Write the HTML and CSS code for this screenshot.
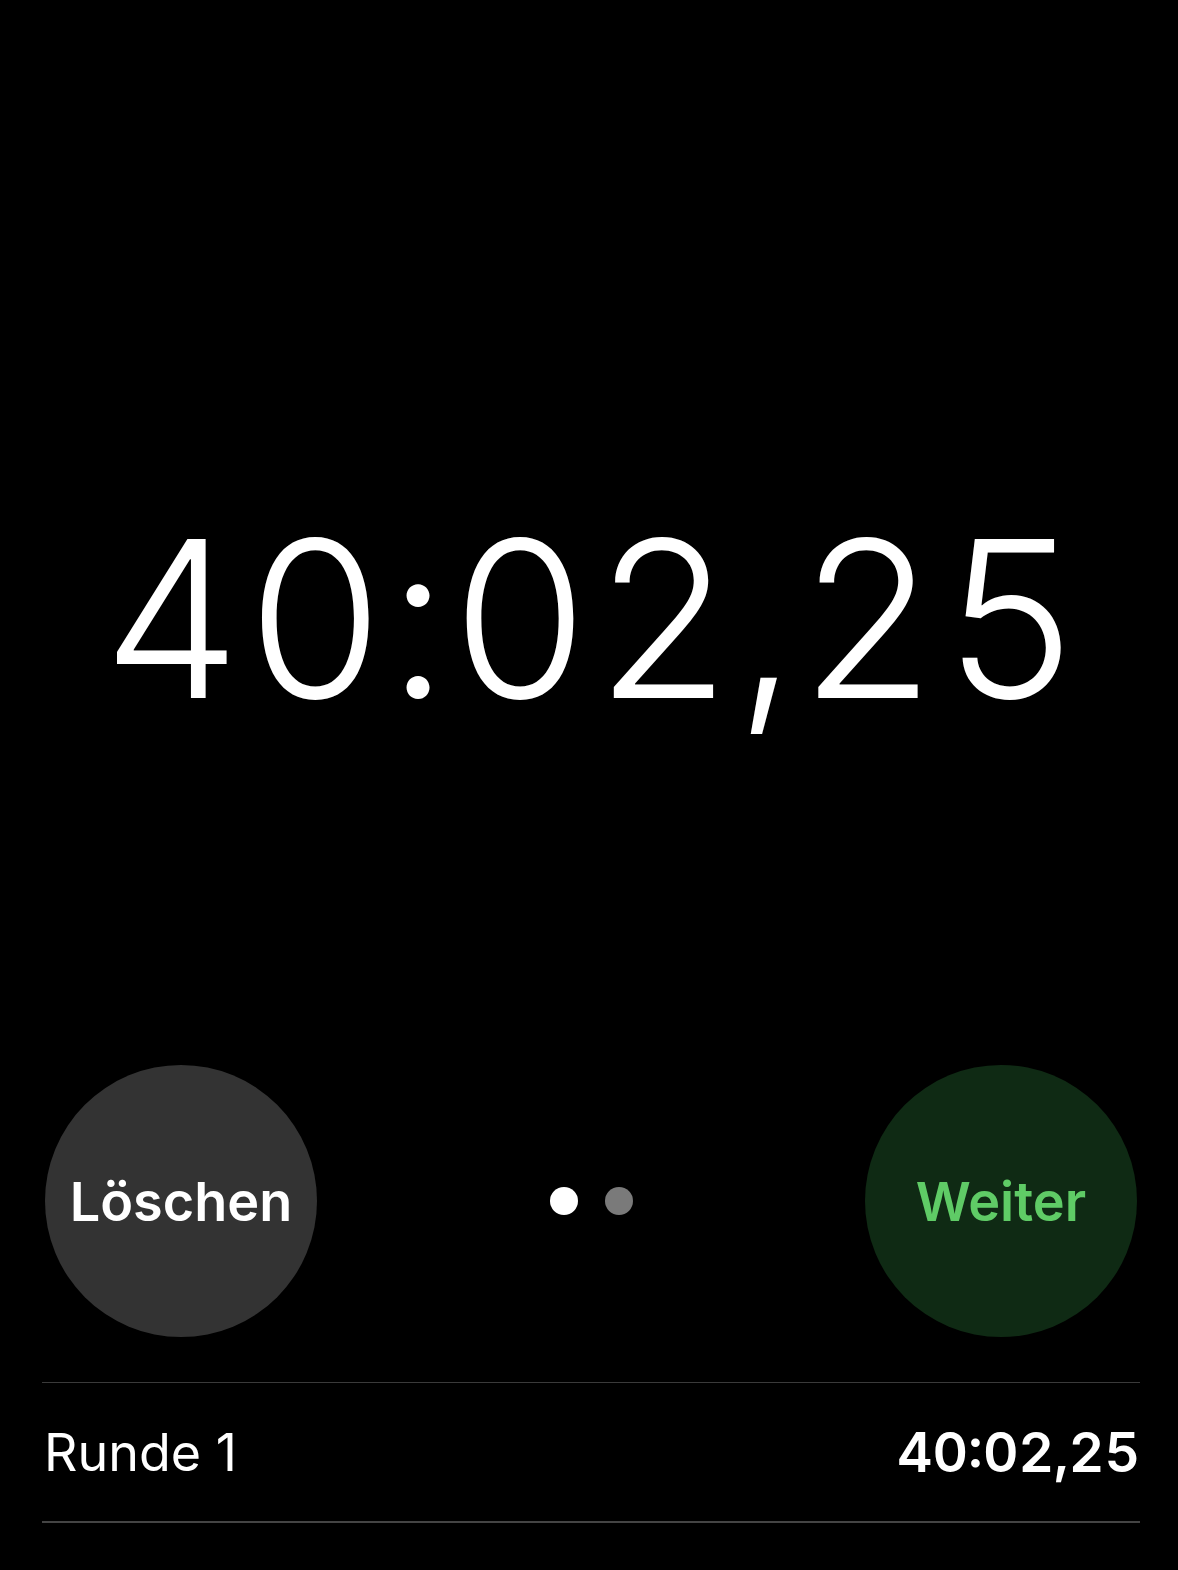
FILE: index.html
```html
<!DOCTYPE html>
<html lang="de">
<head>
<meta charset="utf-8">
<title>Stoppuhr</title>
<link rel="stylesheet" href="styles.css">
</head>
<body>
<main class="screen">
  <section class="display">
    <div class="time">40:02,25</div>
  </section>
  <section class="controls">
    <button class="btn btn-reset">Löschen</button>
    <div class="pager">
      <span class="dot dot-active"></span>
      <span class="dot"></span>
    </div>
    <button class="btn btn-resume">Weiter</button>
  </section>
  <ul class="laps">
    <li class="lap">
      <span class="lap-name">Runde 1</span>
      <span class="lap-time">40:02,25</span>
    </li>
  </ul>
</main>
</body>
</html>
```
FILE: styles.css
```css
* { box-sizing: border-box; }
html, body {
  margin: 0;
  padding: 0;
  background: #000;
}
.screen {
  width: 1178px;
  height: 1570px;
  background: #000;
  color: #fff;
  font-family: Inter, "Noto Sans", "Liberation Sans", sans-serif;
  display: flex;
  flex-direction: column;
  overflow: hidden;
}
.display {
  padding-top: 510px;
  padding-left: 8px;
  display: flex;
  justify-content: center;
}
.time {
  font-size: 218px;
  line-height: 1;
  font-weight: 300;
  font-variant-numeric: tabular-nums;
  letter-spacing: 2.5px;
}
.controls {
  margin-top: 337px;
  padding: 0 41px 0 45px;
  display: flex;
  align-items: center;
  justify-content: space-between;
}
.btn {
  width: 272px;
  height: 272px;
  border-radius: 50%;
  border: none;
  font-family: inherit;
  font-size: 54px;
  font-weight: 600;
  display: flex;
  align-items: center;
  justify-content: center;
  padding: 0;
}
.btn-reset {
  background: #333333;
  color: #fff;
}
.btn-resume {
  background: #0f2a14;
  color: #5fcb66;
}
.pager {
  display: flex;
  gap: 27px;
  align-items: center;
}
.dot {
  width: 28px;
  height: 28px;
  border-radius: 50%;
  background: #7a7a7a;
}
.dot-active {
  background: #fff;
}
.laps {
  list-style: none;
  margin: 45px 38px 0 42px;
  padding: 0;
  border-top: 1px solid #3a3a3a;
}
.lap {
  height: 140px;
  border-bottom: 2px solid #444;
  display: flex;
  align-items: center;
  justify-content: space-between;
  font-size: 55px;
}
.lap-name {
  font-weight: 400;
  font-size: 52px;
  padding-left: 2px;
}
.lap-time {
  font-weight: 600;
  font-variant-numeric: tabular-nums;
}
```
